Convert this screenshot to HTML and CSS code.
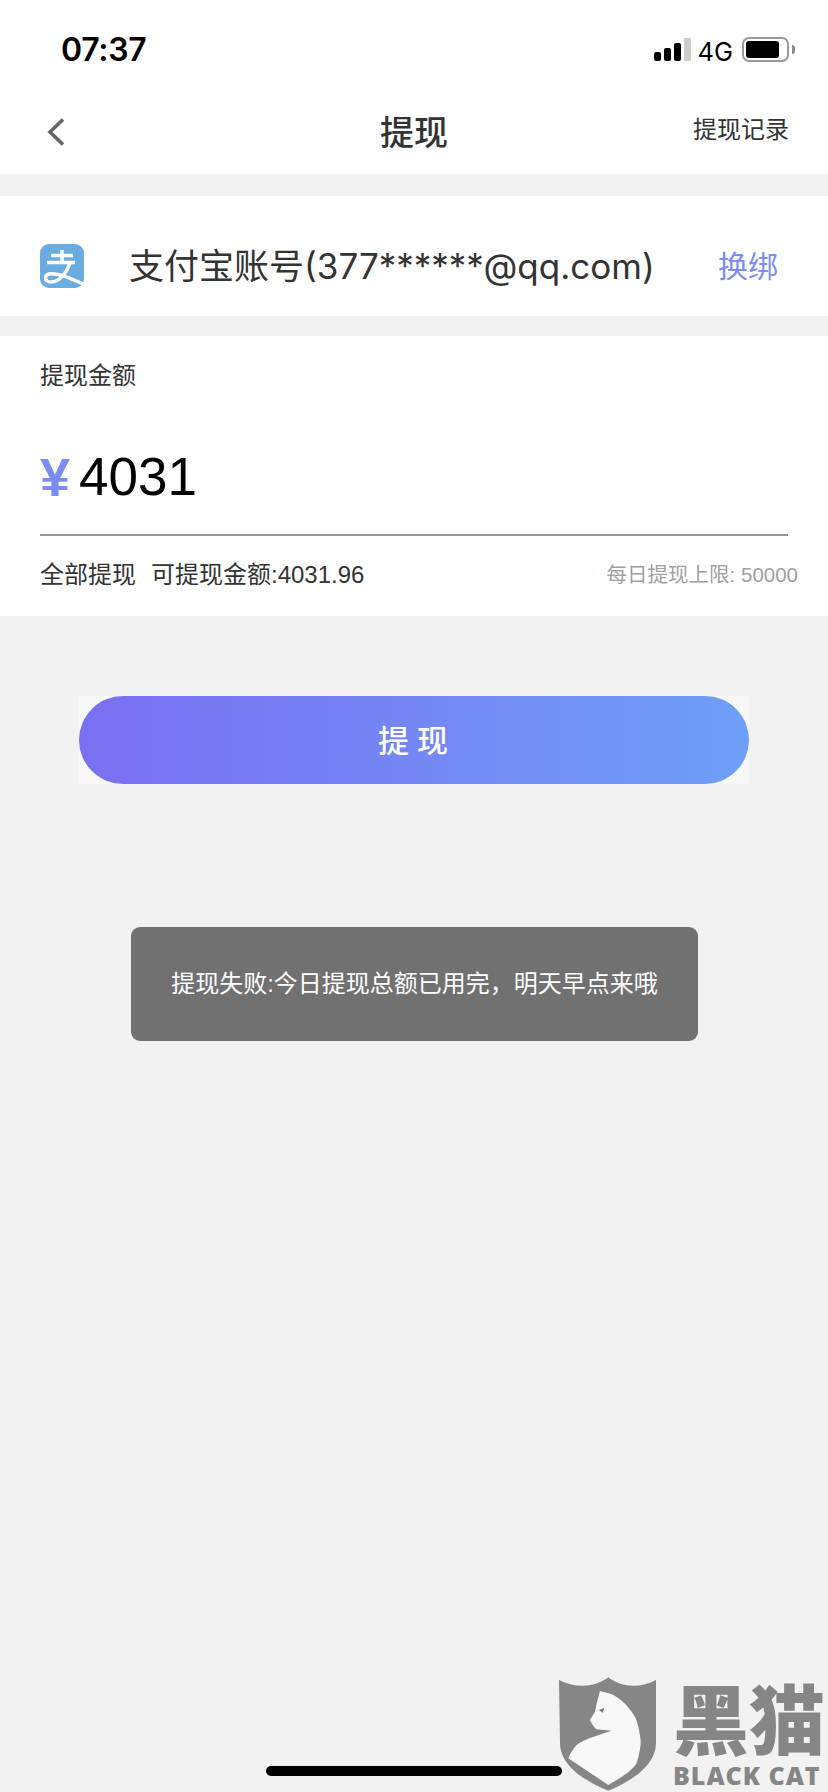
FILE: index.html
```html
<!DOCTYPE html>
<html lang="zh-CN">
<head>
<meta charset="utf-8">
<title>提现</title>
<link rel="stylesheet" href="styles.css">
</head>
<body>
<div class="screen">
  <header class="top">
    <div class="status">
      <span class="time">07:37</span>
      <div class="status-right">
        <div class="signal"><i class="b1"></i><i class="b2"></i><i class="b3"></i><i class="b4"></i></div>
        <span class="net">4G</span>
        <div class="battery"><div class="battery-fill"></div></div>
        <div class="battery-nub"></div>
      </div>
    </div>
    <nav class="nav">
      <svg class="back" width="18" height="28" viewBox="0 0 18 28"><path d="M16 1.5 3 14l13 12.5" fill="none" stroke="#666" stroke-width="3.6"/></svg>
      <h1 class="title">提现</h1>
      <span class="record">提现记录</span>
    </nav>
  </header>

  <section class="account">
    <svg class="alipay" width="44" height="44" viewBox="0 0 44 44">
      <rect width="44" height="44" rx="9" fill="#6aabe0"/>
      <g fill="none" stroke="#fff" stroke-width="3.500">
        <path d="M22 6v12M11 11.500h22M7 18.500h28"/>
        <path d="M30 19C27 28 20 38 11 38 4 38 4 31 9 30c8-1.500 18 3 34 10"/>
      </g>
    </svg>
    <span class="account-name">支付宝账号(377******@qq.com)</span>
    <span class="rebind">换绑</span>
  </section>

  <section class="amount-card">
    <div class="label">提现金额</div>
    <div class="amount"><span class="yen">¥</span><span class="value">4031</span></div>
    <div class="meta">
      <div class="meta-left"><span>全部提现</span><span>可提现金额:4031.96</span></div>
      <span class="limit">每日提现上限: 50000</span>
    </div>
  </section>

  <div class="submit-wrap"><button class="submit">提现</button></div>

  <div class="toast">提现失败:今日提现总额已用完&#xFF0C;明天早点来哦</div>

  <div class="home-bar"></div>

  <div class="watermark">
    <svg class="shield" width="100" height="118" viewBox="0 0 100 118">
      <path d="M1 5C18 14 38 12 50.300 2.300 62 12 82 14 98 5V68C98 90 74 106 50.300 115.700 26 106 2 90 2 68Z" fill="#868686"/>
      <path d="M42 16 50.300 18.300C58 20 65 27 65 27 72 33 77 42 77 42 81 50 82.700 65 82.700 65 83 75 78.700 88 78.700 88 74 96 62 103 62 103L50.300 110 10.300 83.300C13 76 18.700 70 18.700 70 24 66 32 63 32 63L53.700 55.700 38.700 54.300C35 52 32 45 32 45L37 36.700 38.700 28.300Z" fill="#f8f8f8"/>
      <path d="M41 35l5-2-1 5Z" fill="#777"/>
    </svg>
    <div class="brand">
      <div class="brand-cn">黑猫</div>
      <div class="brand-en">BLACK CAT</div>
    </div>
  </div>
</div>
</body>
</html>
```
FILE: styles.css
```css
* { box-sizing: border-box; }
html, body { margin: 0; padding: 0; }
body {
  font-family: "Liberation Sans", "Noto Sans CJK SC", sans-serif;
  background: #f2f2f2;
  color: #333;
}
.screen {
  position: relative;
  width: 828px;
  height: 1792px;
  overflow: hidden;
  background: #f2f2f2;
}
.top { background: #fff; height: 174px; }
.status {
  height: 88px;
  padding: 31px 33px 0 61px;
  display: flex;
  justify-content: space-between;
  align-items: flex-start;
}
.time { font: 600 32px/38px Inter, sans-serif; color: #000; letter-spacing: -0.3px; }
.status-right { display: flex; align-items: flex-start; padding-top: 7px; }
.signal { display: flex; align-items: flex-end; gap: 3.500px; height: 23px; }
.signal i { display: block; width: 6.500px; background: #000; border-radius: 2px; }
.signal .b1 { height: 9px; }
.signal .b2 { height: 13px; }
.signal .b3 { height: 18px; }
.signal .b4 { height: 23px; background: #ccc; border-radius: 1px; }
.net { font: 400 25.500px/23px Inter, sans-serif; color: #000; margin: 2px 9px 0 7px; }
.battery {
  width: 47px; height: 25px; margin-top: -1px;
  border: 2px solid #999; border-radius: 7px;
  padding: 2px;
}
.battery-fill { width: 33px; height: 17px; background: #000; border-radius: 3px; }
.battery-nub { width: 3px; height: 9px; margin: 7px 0 0 3px; background: #888; border-radius: 0 3px 3px 0; }

.nav {
  height: 86px;
  display: flex;
  align-items: center;
  justify-content: space-between;
  padding: 0 39px 0 47px;
  position: relative;
}
.title {
  position: absolute; left: 0; right: 0; top: 21px; margin: 0;
  text-align: center; font-size: 34px; line-height: 48px; font-weight: 500; color: #333;
}
.record { font-size: 24px; line-height: 34px; color: #333; margin-top: -2px; }
.back { margin-top: 2px; }

.account {
  margin-top: 22px;
  height: 120px;
  background: #fff;
  display: flex;
  align-items: flex-start;
  padding: 48px 50px 0 40px;
}
.account-name { margin: -3px 0 0 45px; font: 400 35px/50px Inter, "Noto Sans CJK SC", sans-serif; flex: 1; white-space: nowrap; color: #333; }
.rebind { margin-top: 1px; font-size: 30px; line-height: 44px; color: #7b8cf5; }

.amount-card {
  margin-top: 20px;
  height: 280px;
  background: #fff;
  padding: 23px 40px 0;
}
.label { font-size: 24px; line-height: 34px; color: #333; }
.amount { display: flex; align-items: center; height: 60px; margin-top: 54px; }
.yen { font: 700 54px/60px "Liberation Sans", sans-serif; color: #7b8cf5; width: 39px; }
.value { font-size: 53px; line-height: 60px; color: #000; }
.meta {
  margin-top: 27px;
  border-top: 2px solid #969696;
  height: 80px;
  padding-top: 22px;
  display: flex;
  justify-content: space-between;
  align-items: flex-start;
}
.meta-left { display: flex; gap: 15px; font-size: 24px; line-height: 34px; color: #333; }
.limit { font-size: 20.500px; line-height: 34px; color: #a0a0a0; margin-right: -10px; white-space: nowrap; }

.submit-wrap {
  margin: 80px 79px 0;
  height: 88px;
  background: #f8f8f8;
}
.submit {
  display: block; width: 100%; height: 100%;
  border: 0; border-radius: 44px;
  background: linear-gradient(90deg, #7a6ff2, #6f9ff8);
  color: #fff;
  font-family: inherit; font-size: 31px; font-weight: 500;
  letter-spacing: 8px; text-indent: 6px; padding-bottom: 4px;
}

.toast {
  position: absolute; left: 131px; top: 927px;
  width: 567px; height: 114px;
  background: #717171; border-radius: 9px;
  color: #fff; font-size: 24px; padding-bottom: 6px;
  display: flex; align-items: center; justify-content: center;
}
.home-bar {
  position: absolute; left: 266px; top: 1766px;
  width: 296px; height: 10px;
  background: #000; border-radius: 5px;
}
.watermark {
  position: absolute; left: 558px; top: 1675px;
  display: flex; gap: 15px;
}
.brand { color: #868686; margin-top: 8px; }
.brand-cn { font-size: 76px; line-height: 80px; font-weight: 900; white-space: nowrap; width: 152px; height: 80px; }
.brand-en { font: 800 25px/24px "Open Sans", sans-serif; letter-spacing: 1px; white-space: nowrap; }
```
